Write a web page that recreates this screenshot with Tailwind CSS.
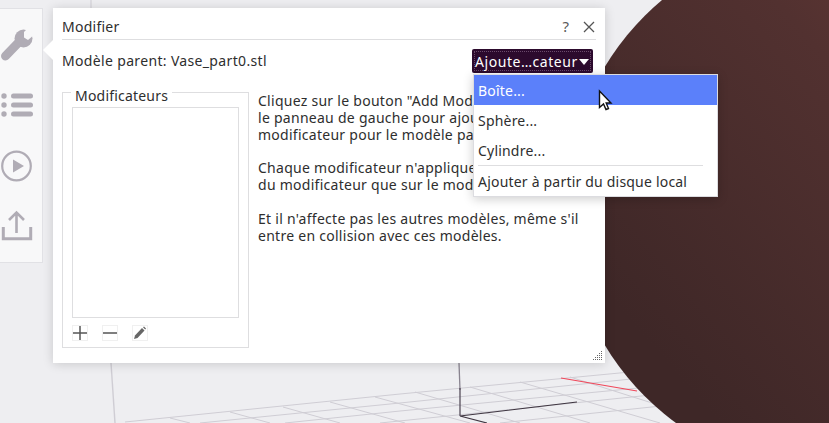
<!DOCTYPE html>
<html><head><meta charset="utf-8"><script src="https://cdn.jsdelivr.net/npm/@tailwindcss/browser@4"></script></head>
<body class="m-0">
<div class="relative w-[829px] h-[423px] overflow-hidden bg-[#eeeef1] font-['Noto_Sans',sans-serif] text-[14px] text-[#2e2e2e]">
  <!-- 3D scene -->
  <svg class="absolute inset-0" width="829" height="423" viewBox="0 0 829 423" fill="none">
    <defs><linearGradient id="m" x1="0.15" y1="0.75" x2="0.9" y2="0.1"><stop offset="0" stop-color="#3e2727"/><stop offset="0.6" stop-color="#523130"/><stop offset="1" stop-color="#6a3b36"/></linearGradient></defs>
    <g stroke="#cfcdd4" stroke-width="1">
      <path d="M91 0V8"/>
      <path d="M111 363L115 423" stroke-width="1.400"/>
      <path d="M125 422L400 394L630 372"/>
      <path d="M200 423L400 403L660 376M285 423L400 411L680 384M380 423L680 392M500 423L680 404"/>
      <path d="M170 418L190 423M230 412L270 423M283 407L340 423M330 402L405 423M375 397L470 423M415 392L520 423M470 387L590 423M520 382L660 423M570 377L690 415"/>
    </g>
    <path d="M459 363L460 390" stroke="#8a8490" stroke-width="1.300"/>
    <path d="M460 388V416" stroke="#4a4250" stroke-width="1.200"/>
    <path d="M460 416L577 402M460 416L487 423" stroke="#3e3540" stroke-width="1.200"/>
    <path d="M561 378L637 391" stroke="#f0475a" stroke-width="1.200"/>
    <circle cx="835" cy="206" r="269" fill="url(#m)"/>
  </svg>

  <!-- Tool panel -->
  <div class="absolute left-0 top-2 w-[43px] h-[255px] bg-[#f8f8f9] border-r border-b border-t border-[#e1e1e5] flex flex-col items-start pl-px pt-[20px]">
    <svg width="32" height="32" viewBox="0 0 32 32" fill="#b0acb5">
      <path d="M4.500 27L18 13" stroke="#b0acb5" stroke-width="9" stroke-linecap="round"/>
      <circle cx="22.500" cy="9.500" r="9"/>
      <path d="M23 3L23 8.500L27 11L33 6L27 -1Z" fill="#f8f8f9"/>
    </svg>
    <svg class="mt-[31px]" width="32" height="26" viewBox="0 0 32 26" fill="#b0acb5"><circle cx="3" cy="4" r="2.700"/><circle cx="3" cy="13" r="2.700"/><circle cx="3" cy="22" r="2.700"/><rect x="10" y="1.500" width="22" height="5" rx="2.500"/><rect x="10" y="10.500" width="22" height="5" rx="2.500"/><rect x="10" y="19.500" width="22" height="5" rx="2.500"/></svg>
    <svg class="mt-[32px]" width="32" height="32" viewBox="0 0 32 32" fill="none"><circle cx="15.500" cy="16" r="14.300" stroke="#b0acb5" stroke-width="2.200"/><path d="M12 9.500L23 16L12 22.500Z" fill="#b0acb5"/></svg>
    <svg class="mt-[27px]" width="32" height="32" viewBox="0 0 32 32" fill="none" stroke="#b0acb5" stroke-width="2.600"><path d="M15.500 24V4M8 11L15.500 3.500L23 11"/><path d="M2.300 18V29.700H29.700V18" stroke-width="3"/></svg>
  </div>

  <!-- Dialog -->
  <div class="absolute left-[53px] top-2 w-[552px] h-[355px] bg-white px-[9px] shadow-[0_1px_10px_rgba(0,0,0,0.16)]">
    <div class="absolute left-[-10px] top-[32px] w-0 h-0 border-y-[10px] border-y-transparent border-r-[10px] border-r-white"></div>
    <div class="h-[32px] flex items-center justify-between border-b border-[#dedee0] pt-[6px]">
      <span class="tracking-[0.25px]">Modifier</span>
      <div class="flex items-center gap-[14px] pr-[1px] text-[#5a5a5a]">
        <span class="text-[15px]">?</span>
        <svg width="12" height="12" viewBox="0 0 12 12" stroke="#555" stroke-width="1.300"><path d="M1 1L11 11M11 1L1 11"/></svg>
      </div>
    </div>
    <div class="relative flex justify-between items-center h-[24px] mt-[9px] mr-[3px]">
      <span class="tracking-[0.34px] -mt-[1px]">Modèle parent: Vase_part0.stl</span>
      <div class="w-[121px] h-[24px] bg-[#2c0a2d] rounded-[2px] text-white flex items-center justify-between px-[2px]">
        <div class="w-full h-[20px] border border-dotted border-[#6a4a6b] flex items-center pr-[1px] justify-between">
          <span class="whitespace-nowrap tracking-[0.55px]">Ajoute…cateur</span>
          <span class="w-0 h-0 border-x-[5px] border-x-transparent border-t-[6px] border-t-white mt-[2px]"></span>
        </div>
      </div>
    </div>
    <div class="flex mt-[19px] gap-[9px]">
      <div class="relative w-[187px] h-[256px] border border-[#dedee0] px-[9px] pt-[14px] shrink-0">
        <span class="absolute left-[8px] -top-[4px] bg-white px-[4px] leading-[14px] tracking-[0.2px]">Modificateurs</span>
        <div class="w-[167px] h-[211px] border border-[#dedee0]"></div>
        <div class="flex gap-[14px] mt-[7px]">
          <div class="w-4 h-4 border border-[#f0f0f0] flex items-center justify-center"><svg width="14" height="14" viewBox="0 0 14 14" stroke="#555" stroke-width="1.500"><path d="M0 7H14M7 0V14"/></svg></div>
          <div class="w-4 h-4 border border-[#f0f0f0] flex items-center justify-center"><svg width="14" height="14" viewBox="0 0 14 14" stroke="#555" stroke-width="1.500"><path d="M0 7H14"/></svg></div>
          <div class="w-4 h-4 border border-[#f0f0f0] flex items-center justify-center"><svg width="14" height="14" viewBox="0 0 14 14" fill="#666"><path d="M1 13l1-3.500 7-7.500 2.500 2.500-7 7.500z"/><path d="M10 1.200l1-.8 2 2-.8 1z"/></svg></div>
        </div>
      </div>
      <div class="leading-[17px] whitespace-nowrap tracking-[0.27px]">
        <p>Cliquez sur le bouton "Add Modificateur" dans<br>le panneau de gauche pour ajouter un<br>modificateur pour le modèle parent.</p>
        <p class="mt-[16px]">Chaque modificateur n'applique ses paramètres<br>du modificateur que sur le modèle.</p>
        <p class="mt-[17px]">Et il n'affecte pas les autres modèles, même s'il<br>entre en collision avec ces modèles.</p>
      </div>
    </div>
    <svg class="absolute right-[2px] bottom-[2px]" width="10" height="10" viewBox="0 0 10 10" fill="#666"><rect x="8" y="0" width="1" height="1"/><rect x="6" y="2" width="1" height="1"/><rect x="8" y="2" width="1" height="1"/><rect x="4" y="4" width="1" height="1"/><rect x="6" y="4" width="1" height="1"/><rect x="8" y="4" width="1" height="1"/><rect x="2" y="6" width="1" height="1"/><rect x="4" y="6" width="1" height="1"/><rect x="6" y="6" width="1" height="1"/><rect x="8" y="6" width="1" height="1"/><rect x="0" y="8" width="1" height="1"/><rect x="2" y="8" width="1" height="1"/><rect x="4" y="8" width="1" height="1"/><rect x="6" y="8" width="1" height="1"/><rect x="8" y="8" width="1" height="1"/></svg>
  </div>

  <!-- Dropdown menu -->
  <div class="absolute left-[473px] top-[74px] w-[245px] bg-white border border-[#dcdce0] shadow-[0_2px_10px_rgba(0,0,0,0.2)] tracking-[0.2px]">
    <div class="h-[30px] flex items-center px-[4px] bg-[#5b80fa] text-white">Boîte...</div>
    <div class="h-[30px] flex items-center px-[4px]">Sphère...</div>
    <div class="h-[30px] flex items-center px-[4px]">Cylindre...</div>
    <div class="h-px bg-[#dedee0] ml-[4px] mr-[14px]"></div>
    <div class="h-[30px] flex items-center px-[4px]">Ajouter à partir du disque local</div>
  </div>

  <!-- Cursor -->
  <svg class="absolute left-[597px] top-[89px]" width="16" height="23" viewBox="0 0 16 23"><path d="M2.500 2V18.500L6.500 15L9 20.500L11.500 19.500L9.200 14H14Z" fill="#fff" stroke="#111" stroke-width="1.400"/></svg>
</div>
</body></html>
